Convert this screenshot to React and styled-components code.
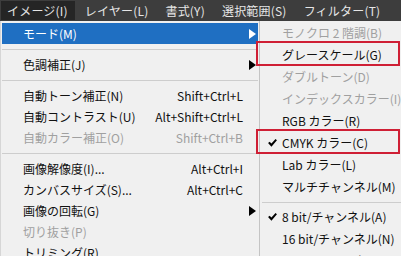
import React from 'react';
import styled, { createGlobalStyle } from 'styled-components';

const GlobalStyle = createGlobalStyle`
  html, body {
    margin: 0;
    padding: 0;
  }
  body {
    width: 401px;
    height: 256px;
    overflow: hidden;
    background: #f0f0f0;
    font-family: "Noto Sans CJK JP", "Noto Sans", sans-serif;
    font-size: 12px;
  }
`;

const Screen = styled.div`
  width: 401px;
  height: 256px;
  overflow: hidden;
  display: flex;
  flex-direction: column;
`;

const MenuBar = styled.div`
  flex: none;
  height: 21px;
  display: flex;
  align-items: stretch;
  padding: 1px 0 1px 1px;
  box-sizing: border-box;
  background: #3d3d3d;
`;

const BarItem = styled.div`
  display: flex;
  align-items: center;
  padding: 0 7px 0 6px;
  margin-right: 4px;
  color: #e6e6e6;
  line-height: 1;
  letter-spacing: 0.2px;
  white-space: nowrap;
  background: ${(p) => (p.$active ? '#252525' : 'transparent')};
`;

const Dropdowns = styled.div`
  flex: 1;
  min-height: 0;
  display: flex;
`;

const MainMenu = styled.div`
  flex: none;
  width: 259px;
  box-sizing: border-box;
  padding: 2px 1px 0 1px;
  border-left: 1px solid #d6d6d6;
  background: #f0f0f0;
`;

const SubMenu = styled.div`
  flex: 1;
  box-sizing: border-box;
  padding-top: 1px;
  border-left: 1px solid #c4c4c4;
  background: #f0f0f0;
`;

const Row = styled.div`
  position: relative;
  height: ${(p) => p.$height}px;
  display: flex;
  align-items: center;
  white-space: nowrap;
  line-height: 1;
  color: ${(p) => (p.$active ? '#ffffff' : p.$disabled ? '#a0a0a0' : '#111111')};
  background: ${(p) => (p.$active ? '#1f6fc2' : 'transparent')};
`;

const Label = styled.span`
  flex: 1;
  padding-left: ${(p) => p.$indent}px;
`;

const Shortcut = styled.span`
  text-align: right;
`;

const ArrowSlot = styled.span`
  flex: none;
  width: 15px;
  display: flex;
  align-items: center;
  padding-left: 6px;
  box-sizing: border-box;
`;

const Arrow = styled.span`
  width: 0;
  height: 0;
  border-left: 7px solid ${(p) => (p.$light ? '#ffffff' : '#000000')};
  border-top: 5px solid transparent;
  border-bottom: 5px solid transparent;
`;

const CheckSlot = styled.span`
  flex: none;
  width: 22px;
  padding-left: 8px;
  box-sizing: border-box;
  display: flex;
  align-items: center;
`;

const Marker = styled.span`
  position: absolute;
  top: -3px;
  bottom: 0;
  left: -4px;
  right: 1px;
  border: 2px solid #cf1f35;
  pointer-events: none;
`;

const Separator = styled.div`
  height: ${(p) => p.$height}px;
  display: flex;
  align-items: center;
  padding-left: ${(p) => p.$inset}px;

  &::after {
    content: '';
    flex: 1;
    height: 1px;
    background: #cdcdcd;
  }
`;

const Check = () => (
  <svg width="9" height="8" viewBox="0 0 10 9">
    <polygon points="0,4.6 1.8,3 3.8,5.2 8.4,0 10,1.4 3.8,8.6" fill="#000" />
  </svg>
);

const barItems = ['イメージ(I)', 'レイヤー(L)', '書式(Y)', '選択範囲(S)', 'フィルター(T)'];

const mainItems = [
  { label: 'モード(M)', arrow: true, active: true },
  { sep: true },
  { label: '色調補正(J)', arrow: true },
  { sep: true },
  { label: '自動トーン補正(N)', shortcut: 'Shift+Ctrl+L' },
  { label: '自動コントラスト(U)', shortcut: 'Alt+Shift+Ctrl+L' },
  { label: '自動カラー補正(O)', shortcut: 'Shift+Ctrl+B', disabled: true },
  { sep: true },
  { label: '画像解像度(I)...', shortcut: 'Alt+Ctrl+I' },
  { label: 'カンバスサイズ(S)...', shortcut: 'Alt+Ctrl+C' },
  { label: '画像の回転(G)', arrow: true },
  { label: '切り抜き(P)', disabled: true },
  { label: 'トリミング(R)' },
];

const modeItems = [
  { label: 'モノクロ 2 階調(B)', disabled: true },
  { label: 'グレースケール(G)', marked: true },
  { label: 'ダブルトーン(D)', disabled: true },
  { label: 'インデックスカラー(I)', disabled: true },
  { label: 'RGB カラー(R)' },
  { label: 'CMYK カラー(C)', checked: true, marked: true },
  { label: 'Lab カラー(L)' },
  { label: 'マルチチャンネル(M)' },
  { sep: true },
  { label: '8 bit/チャンネル(A)', checked: true },
  { label: '16 bit/チャンネル(N)' },
  { label: '32 bit/チャンネル(H)' },
];

const App = () => {
  return (
    <Screen>
      <GlobalStyle />
      <MenuBar>
        {barItems.map((name, i) => (
          <BarItem key={name} $active={i === 0}>
            {name}
          </BarItem>
        ))}
      </MenuBar>
      <Dropdowns>
        <MainMenu>
          {mainItems.map((item, i) =>
            item.sep ? (
              <Separator key={i} $height={10} $inset={0} />
            ) : (
              <Row key={i} $height={21} $active={item.active} $disabled={item.disabled}>
                <Label $indent={21}>{item.label}</Label>
                {item.shortcut && <Shortcut>{item.shortcut}</Shortcut>}
                <ArrowSlot>{item.arrow && <Arrow $light={item.active} />}</ArrowSlot>
              </Row>
            )
          )}
        </MainMenu>
        <SubMenu>
          {modeItems.map((item, i) =>
            item.sep ? (
              <Separator key={i} $height={8} $inset={2} />
            ) : (
              <Row key={i} $height={22} $disabled={item.disabled}>
                <CheckSlot>{item.checked && <Check />}</CheckSlot>
                <Label $indent={0}>{item.label}</Label>
                {item.marked && <Marker />}
              </Row>
            )
          )}
        </SubMenu>
      </Dropdowns>
    </Screen>
  );
};

export default App;
